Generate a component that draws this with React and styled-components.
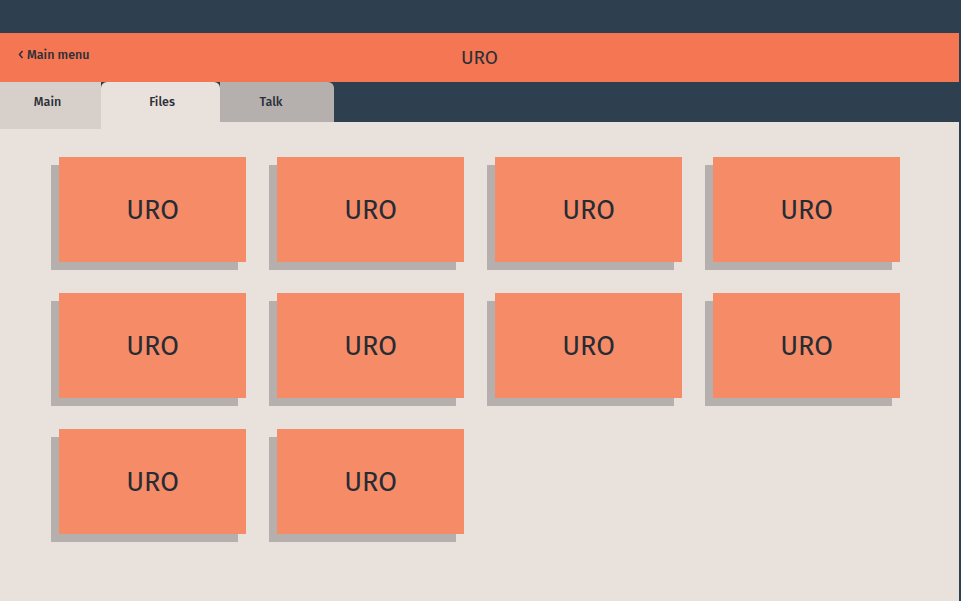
import React from 'react'
import styled, { createGlobalStyle } from 'styled-components'

const GlobalStyle = createGlobalStyle`
  html, body {
    margin: 0;
    padding: 0;
    background: #2e4050;
    font-family: "Fira Sans", "Open Sans", "Noto Sans", sans-serif;
  }
`

const Page = styled.div`
  width: 961px;
  height: 601px;
  display: flex;
  flex-direction: column;
  background: #2e4050;
  overflow: hidden;
`

const TopBar = styled.div`
  height: 33px;
  flex: 0 0 auto;
`

const Header = styled.div`
  position: relative;
  height: 49px;
  width: 959px;
  background: #f47652;
  display: flex;
  align-items: center;
  justify-content: center;
  color: #2b2f38;
`

const Title = styled.div`
  font-size: 19px;
  font-weight: 400;
  margin-top: -1px;
`

const BackLink = styled.a`
  position: absolute;
  left: 18px;
  top: 14px;
  font-size: 12.5px;
  font-weight: 500;
  color: #2b2f38;
  display: flex;
  align-items: center;
  gap: 3px;
`

const TabRow = styled.div`
  display: flex;
  height: 40px;
  align-items: flex-start;
`

const Tab = styled.div`
  width: ${({ w }) => w}px;
  height: ${({ h }) => h}px;
  background: ${({ bg }) => bg};
  border-radius: ${({ radius }) => radius};
  font-size: 12.5px;
  font-weight: 500;
  color: #2b2f38;
  display: flex;
  justify-content: center;
  padding-top: 12px;
  padding-left: ${({ shift }) => (shift > 0 ? shift : 0)}px;
  padding-right: ${({ shift }) => (shift < 0 ? -shift : 0)}px;
  box-sizing: border-box;
  position: relative;
  z-index: 1;
`

const Content = styled.div`
  flex: 1;
  width: 959px;
  background: #e9e1db;
  padding: 35px 0 0 51px;
  box-sizing: border-box;
`

const Grid = styled.div`
  display: grid;
  grid-template-columns: repeat(4, 195px);
  column-gap: 23px;
  row-gap: 23px;
`

const Card = styled.div`
  width: 195px;
  height: 113px;
  position: relative;
`

const CardShadow = styled.div`
  position: absolute;
  left: 0;
  top: 8px;
  width: 187px;
  height: 105px;
  background: #b5b0ae;
`

const CardFace = styled.div`
  position: absolute;
  left: 8px;
  top: 0;
  width: 187px;
  height: 105px;
  background: #f58c67;
  display: flex;
  align-items: center;
  justify-content: center;
  font-size: 27px;
  color: #272b34;
`

const tabs = [
  { label: 'Main', w: 101, h: 47, bg: '#d6cfca', radius: '0', shift: -6 },
  { label: 'Files', w: 119, h: 47, bg: '#e9e1db', radius: '6px 6px 0 0', shift: 3 },
  { label: 'Talk', w: 114, h: 40, bg: '#b5b0ae', radius: '0 6px 0 0', shift: -12 }
]

const Chevron = () => (
  <svg width='6' height='9' viewBox='0 0 6 9'>
    <path d='M4.5 1 L1.5 4.5 L4.5 8' stroke='#2b2f38' strokeWidth='1.5' fill='none' />
  </svg>
)

export default function App () {
  const cards = Array.from({ length: 10 }, (_, i) => i)
  return (
    <Page>
      <GlobalStyle />
      <TopBar />
      <Header>
        <BackLink><Chevron />Main menu</BackLink>
        <Title>URO</Title>
      </Header>
      <TabRow>
        {tabs.map((t) => (
          <Tab key={t.label} w={t.w} h={t.h} bg={t.bg} radius={t.radius} shift={t.shift}>{t.label}</Tab>
        ))}
      </TabRow>
      <Content>
        <Grid>
          {cards.map((i) => (
            <Card key={i}>
              <CardShadow />
              <CardFace>URO</CardFace>
            </Card>
          ))}
        </Grid>
      </Content>
    </Page>
  )
}
